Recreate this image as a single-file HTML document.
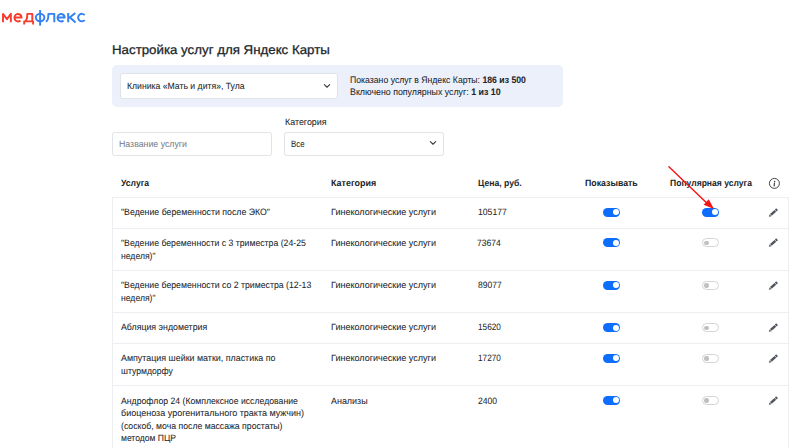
<!DOCTYPE html><html><head><meta charset="utf-8"><style>
html,body{margin:0;padding:0;background:#fff;width:800px;height:448px;overflow:hidden;position:relative}
.t{position:absolute;white-space:nowrap;font-family:"Liberation Sans",sans-serif;line-height:30px;text-rendering:geometricPrecision;-webkit-text-stroke:0.05px currentColor}
.b{position:absolute;box-sizing:border-box}
.tg{width:17px;height:9px;border-radius:5px}
.tg.on{background:#0d6efd}
.tg.on::after{content:"";position:absolute;right:1.25px;top:1.5px;width:6px;height:6px;border-radius:50%;background:#fff}
.tg.off{border:1px solid #d5d5d5;background:#fff;margin-top:0.4px}
.tg.off::after{content:"";position:absolute;left:1.3px;top:1.3px;width:4.4px;height:4.4px;border-radius:50%;background:#c0c0c0}
</style></head><body>
<div class="b" style="left:112px;top:65.25px;width:451px;height:41.25px;background:#ebf0fa;border-radius:5px"></div>
<div class="b" style="left:120px;top:73px;width:218px;height:26px;background:#fff;border:1px solid #e0e3e7;border-radius:3px"></div>
<div class="b" style="left:112px;top:132px;width:160px;height:24px;background:#fff;border:1px solid #e0e3e7;border-radius:3px"></div>
<div class="b" style="left:284px;top:132px;width:160px;height:24px;background:#fff;border:1px solid #e0e3e7;border-radius:3px"></div>
<div class="b" style="left:112px;top:197px;width:677px;height:251px;border-left:1px solid #eceef1;border-right:1px solid #eceef1"></div>
<div class="b" style="left:112px;top:197px;width:677px;height:1px;background:#eceef1"></div>
<div class="b" style="left:112px;top:228px;width:677px;height:1px;background:#eceef1"></div>
<div class="b" style="left:112px;top:270px;width:677px;height:1px;background:#eceef1"></div>
<div class="b" style="left:112px;top:312px;width:677px;height:1px;background:#eceef1"></div>
<div class="b" style="left:112px;top:343px;width:677px;height:1px;background:#eceef1"></div>
<div class="b" style="left:112px;top:385px;width:677px;height:1px;background:#eceef1"></div>
<div class="t" style="-webkit-text-stroke:0.28px currentColor;left:111.70px;top:34.80px;font-size:12.7px;font-weight:400;color:#212529;letter-spacing:0.000px;transform:scaleX(1.0473);transform-origin:0 0">Настройка услуг для Яндекс Карты</div>
<div class="t" style="left:127.25px;top:71.19px;font-size:9.2px;font-weight:400;color:#212529;letter-spacing:0.000px;transform:scaleX(0.9420);transform-origin:0 0">Клиника «Мать и дитя», Тула</div>
<div class="t" style="left:350.00px;top:65.39px;font-size:9.3px;font-weight:400;color:#212529;letter-spacing:0.000px;transform:scaleX(0.9340);transform-origin:0 0">Показано услуг в Яндекс Карты: <b>186 из 500</b></div>
<div class="t" style="left:350.00px;top:77.19px;font-size:9.3px;font-weight:400;color:#212529;letter-spacing:0.000px;transform:scaleX(0.9491);transform-origin:0 0">Включено популярных услуг: <b>1 из 10</b></div>
<div class="t" style="left:284.60px;top:107.19px;font-size:9.2px;font-weight:400;color:#212529;letter-spacing:0.000px;transform:scaleX(0.9686);transform-origin:0 0">Категория</div>
<div class="t" style="left:118.75px;top:129.09px;font-size:9.2px;font-weight:400;color:#7a8087;letter-spacing:0.000px;transform:scaleX(0.9556);transform-origin:0 0">Название услуги</div>
<div class="t" style="left:291.25px;top:129.09px;font-size:9.2px;font-weight:400;color:#212529;letter-spacing:0.000px;transform:scaleX(0.8594);transform-origin:0 0">Все</div>
<div class="t" style="-webkit-text-stroke:0;left:120.60px;top:167.72px;font-size:9.2px;font-weight:700;color:#212529;letter-spacing:0.000px;transform:scaleX(0.9383);transform-origin:0 0">Услуга</div>
<div class="t" style="-webkit-text-stroke:0;left:330.75px;top:167.72px;font-size:9.2px;font-weight:700;color:#212529;letter-spacing:0.000px;transform:scaleX(0.9728);transform-origin:0 0">Категория</div>
<div class="t" style="-webkit-text-stroke:0;left:478.00px;top:167.72px;font-size:9.2px;font-weight:700;color:#212529;letter-spacing:0.000px;transform:scaleX(0.9402);transform-origin:0 0">Цена, руб.</div>
<div class="t" style="-webkit-text-stroke:0;left:585.00px;top:167.72px;font-size:9.2px;font-weight:700;color:#212529;letter-spacing:0.000px;transform:scaleX(0.9545);transform-origin:0 0">Показывать</div>
<div class="t" style="-webkit-text-stroke:0;left:670.00px;top:167.72px;font-size:9.2px;font-weight:700;color:#212529;letter-spacing:0.000px;transform:scaleX(0.9318);transform-origin:0 0">Популярная услуга</div>
<div class="t" style="left:121.00px;top:197.29px;font-size:9.2px;font-weight:400;color:#212529;letter-spacing:0.000px;transform:scaleX(0.9532);transform-origin:0 0">&quot;Ведение беременности после ЭКО&quot;</div>
<div class="t" style="left:330.75px;top:197.29px;font-size:9.2px;font-weight:400;color:#212529;letter-spacing:0.000px;transform:scaleX(0.9835);transform-origin:0 0">Гинекологические услуги</div>
<div class="t" style="left:478.00px;top:197.29px;font-size:9.2px;font-weight:400;color:#212529;letter-spacing:0.000px;transform:scaleX(0.9417);transform-origin:0 0">105177</div>
<div class="t" style="left:121.00px;top:228.09px;font-size:9.2px;font-weight:400;color:#212529;letter-spacing:0.000px;transform:scaleX(0.9472);transform-origin:0 0">&quot;Ведение беременности с 3 триместра (24-25</div>
<div class="t" style="left:121.00px;top:240.59px;font-size:9.2px;font-weight:400;color:#212529;letter-spacing:0.000px;transform:scaleX(0.9378);transform-origin:0 0">неделя)&quot;</div>
<div class="t" style="left:330.75px;top:228.09px;font-size:9.2px;font-weight:400;color:#212529;letter-spacing:0.000px;transform:scaleX(0.9835);transform-origin:0 0">Гинекологические услуги</div>
<div class="t" style="left:477.07px;top:228.09px;font-size:9.2px;font-weight:400;color:#212529;letter-spacing:0.000px;transform:scaleX(0.9300);transform-origin:0 0">73674</div>
<div class="t" style="left:121.00px;top:270.09px;font-size:9.2px;font-weight:400;color:#212529;letter-spacing:0.000px;transform:scaleX(0.9500);transform-origin:0 0">&quot;Ведение беременности со 2 триместра (12-13</div>
<div class="t" style="left:121.00px;top:282.59px;font-size:9.2px;font-weight:400;color:#212529;letter-spacing:0.000px;transform:scaleX(0.9378);transform-origin:0 0">неделя)&quot;</div>
<div class="t" style="left:330.75px;top:270.09px;font-size:9.2px;font-weight:400;color:#212529;letter-spacing:0.000px;transform:scaleX(0.9835);transform-origin:0 0">Гинекологические услуги</div>
<div class="t" style="left:478.00px;top:270.09px;font-size:9.2px;font-weight:400;color:#212529;letter-spacing:0.000px;transform:scaleX(0.9300);transform-origin:0 0">89077</div>
<div class="t" style="left:121.00px;top:312.29px;font-size:9.2px;font-weight:400;color:#212529;letter-spacing:0.000px;transform:scaleX(0.9578);transform-origin:0 0">Абляция эндометрия</div>
<div class="t" style="left:330.75px;top:312.29px;font-size:9.2px;font-weight:400;color:#212529;letter-spacing:0.000px;transform:scaleX(0.9835);transform-origin:0 0">Гинекологические услуги</div>
<div class="t" style="left:478.00px;top:312.29px;font-size:9.2px;font-weight:400;color:#212529;letter-spacing:0.000px;transform:scaleX(0.8942);transform-origin:0 0">15620</div>
<div class="t" style="left:121.00px;top:343.09px;font-size:9.2px;font-weight:400;color:#212529;letter-spacing:0.000px;transform:scaleX(0.9681);transform-origin:0 0">Ампутация шейки матки, пластика по</div>
<div class="t" style="left:121.00px;top:355.59px;font-size:9.2px;font-weight:400;color:#212529;letter-spacing:0.000px;transform:scaleX(0.9400);transform-origin:0 0">штурмдорфу</div>
<div class="t" style="left:330.75px;top:343.09px;font-size:9.2px;font-weight:400;color:#212529;letter-spacing:0.000px;transform:scaleX(0.9835);transform-origin:0 0">Гинекологические услуги</div>
<div class="t" style="left:478.00px;top:343.09px;font-size:9.2px;font-weight:400;color:#212529;letter-spacing:0.000px;transform:scaleX(0.8942);transform-origin:0 0">17270</div>
<div class="t" style="left:121.00px;top:385.89px;font-size:9.2px;font-weight:400;color:#212529;letter-spacing:0.000px;transform:scaleX(0.9444);transform-origin:0 0">Андрофлор 24 (Комплексное исследование</div>
<div class="t" style="left:121.00px;top:398.39px;font-size:9.2px;font-weight:400;color:#212529;letter-spacing:0.000px;transform:scaleX(0.9791);transform-origin:0 0">биоценоза урогенитального тракта мужчин)</div>
<div class="t" style="left:121.00px;top:410.89px;font-size:9.2px;font-weight:400;color:#212529;letter-spacing:0.000px;transform:scaleX(0.9465);transform-origin:0 0">(соскоб, моча после массажа простаты)</div>
<div class="t" style="left:121.00px;top:423.39px;font-size:9.2px;font-weight:400;color:#212529;letter-spacing:0.000px;transform:scaleX(0.9322);transform-origin:0 0">методом ПЦР</div>
<div class="t" style="left:330.75px;top:385.89px;font-size:9.2px;font-weight:400;color:#212529;letter-spacing:0.000px;transform:scaleX(0.9730);transform-origin:0 0">Анализы</div>
<div class="t" style="left:478.00px;top:385.89px;font-size:9.2px;font-weight:400;color:#212529;letter-spacing:0.000px;transform:scaleX(0.9375);transform-origin:0 0">2400</div>
<svg class="b" style="left:0;top:0" width="92" height="30" viewBox="0 0 92 30" fill="none" stroke-width="1.95">
<g stroke="#f73e31" stroke-linejoin="round">
<path d="M3 22.3 V13.9 L6.95 19.1 L10.85 13.9 V22.3"/>
<path d="M14.4 17.5 H21.6 A3.6 3.75 0 1 0 20.4 20.5"/>
<path d="M24.2 24.4 V21.35 H33.1 V24.4 M32.3 21.35 V13.85 H27.3 C27.3 17.5 26.8 20.2 25.3 21.35"/>
</g>
<g stroke="#3381f2" stroke-linejoin="round">
<ellipse cx="40.1" cy="17.6" rx="4.3" ry="3.75"/>
<path d="M40.1 10.1 V25.6"/>
<path d="M54.3 22.3 V13.85 H48.4 C48.4 18 48.3 21.5 45.8 21.5"/>
<path d="M57.5 17.5 H64.7 A3.6 3.75 0 1 0 63.5 20.5"/>
<path d="M68.2 12.9 V22.3 M68.2 17.5 H69.7 L75.3 13.1 M69.7 17.3 L75.6 22.4"/>
<path d="M84.7 15.2 A3.7 3.75 0 1 0 84.7 20"/>
</g>
</svg>
<svg class="b" style="left:322.5px;top:83px" width="8" height="6" viewBox="0 0 8 6"><path d="M1.35 1.7 L4 4.25 L6.65 1.7" fill="none" stroke="#383e44" stroke-width="1.1" stroke-linecap="round" stroke-linejoin="round"/></svg>
<svg class="b" style="left:429.1px;top:140.1px" width="8" height="6" viewBox="0 0 8 6"><path d="M1.35 1.7 L4 4.25 L6.65 1.7" fill="none" stroke="#383e44" stroke-width="1.1" stroke-linecap="round" stroke-linejoin="round"/></svg>
<svg class="b" style="left:768px;top:177px" width="13" height="13" viewBox="0 0 13 13"><circle cx="6.4" cy="6.4" r="5" fill="none" stroke="#444" stroke-width="1"/><circle cx="6.6" cy="4.4" r="0.75" fill="#444"/><path d="M6.5 6 L6.1 8.8" stroke="#444" stroke-width="1.2" stroke-linecap="round"/></svg>
<div class="b tg on" style="left:603px;top:207.7px"></div>
<div class="b tg on" style="left:702px;top:207.7px"></div>
<svg class="b" style="left:764.7px;top:204.79999999999998px" width="16" height="16" viewBox="-8 -8 16 16"><g transform="rotate(-42)" fill="#4f565d"><path d="M-5.6 0 L-3.3 -1.3 V1.3 Z"/><rect x="-2.85" y="-1.3" width="6" height="2.6"/><rect x="3.65" y="-1.3" width="1.95" height="2.6" rx="0.45"/></g></svg>
<div class="b tg on" style="left:603px;top:238.1px"></div>
<div class="b tg off" style="left:702px;top:238.1px"></div>
<svg class="b" style="left:764.7px;top:235.2px" width="16" height="16" viewBox="-8 -8 16 16"><g transform="rotate(-42)" fill="#4f565d"><path d="M-5.6 0 L-3.3 -1.3 V1.3 Z"/><rect x="-2.85" y="-1.3" width="6" height="2.6"/><rect x="3.65" y="-1.3" width="1.95" height="2.6" rx="0.45"/></g></svg>
<div class="b tg on" style="left:603px;top:280.7px"></div>
<div class="b tg off" style="left:702px;top:280.7px"></div>
<svg class="b" style="left:764.7px;top:277.8px" width="16" height="16" viewBox="-8 -8 16 16"><g transform="rotate(-42)" fill="#4f565d"><path d="M-5.6 0 L-3.3 -1.3 V1.3 Z"/><rect x="-2.85" y="-1.3" width="6" height="2.6"/><rect x="3.65" y="-1.3" width="1.95" height="2.6" rx="0.45"/></g></svg>
<div class="b tg on" style="left:603px;top:323.0px"></div>
<div class="b tg off" style="left:702px;top:323.0px"></div>
<svg class="b" style="left:764.7px;top:320.1px" width="16" height="16" viewBox="-8 -8 16 16"><g transform="rotate(-42)" fill="#4f565d"><path d="M-5.6 0 L-3.3 -1.3 V1.3 Z"/><rect x="-2.85" y="-1.3" width="6" height="2.6"/><rect x="3.65" y="-1.3" width="1.95" height="2.6" rx="0.45"/></g></svg>
<div class="b tg on" style="left:603px;top:353.5px"></div>
<div class="b tg off" style="left:702px;top:353.5px"></div>
<svg class="b" style="left:764.7px;top:350.6px" width="16" height="16" viewBox="-8 -8 16 16"><g transform="rotate(-42)" fill="#4f565d"><path d="M-5.6 0 L-3.3 -1.3 V1.3 Z"/><rect x="-2.85" y="-1.3" width="6" height="2.6"/><rect x="3.65" y="-1.3" width="1.95" height="2.6" rx="0.45"/></g></svg>
<div class="b tg on" style="left:603px;top:395.8px"></div>
<div class="b tg off" style="left:702px;top:395.8px"></div>
<svg class="b" style="left:764.7px;top:392.90000000000003px" width="16" height="16" viewBox="-8 -8 16 16"><g transform="rotate(-42)" fill="#4f565d"><path d="M-5.6 0 L-3.3 -1.3 V1.3 Z"/><rect x="-2.85" y="-1.3" width="6" height="2.6"/><rect x="3.65" y="-1.3" width="1.95" height="2.6" rx="0.45"/></g></svg>
<svg class="b" style="left:0;top:0" width="800" height="448"><path d="M668.9 166.7 L707.3 203.4" stroke="#f51414" stroke-width="1.4" stroke-linecap="round"/><path d="M714 209 L703.7 204.8 L708.7 199.2 Z" fill="#f51414"/></svg>
</body></html>
